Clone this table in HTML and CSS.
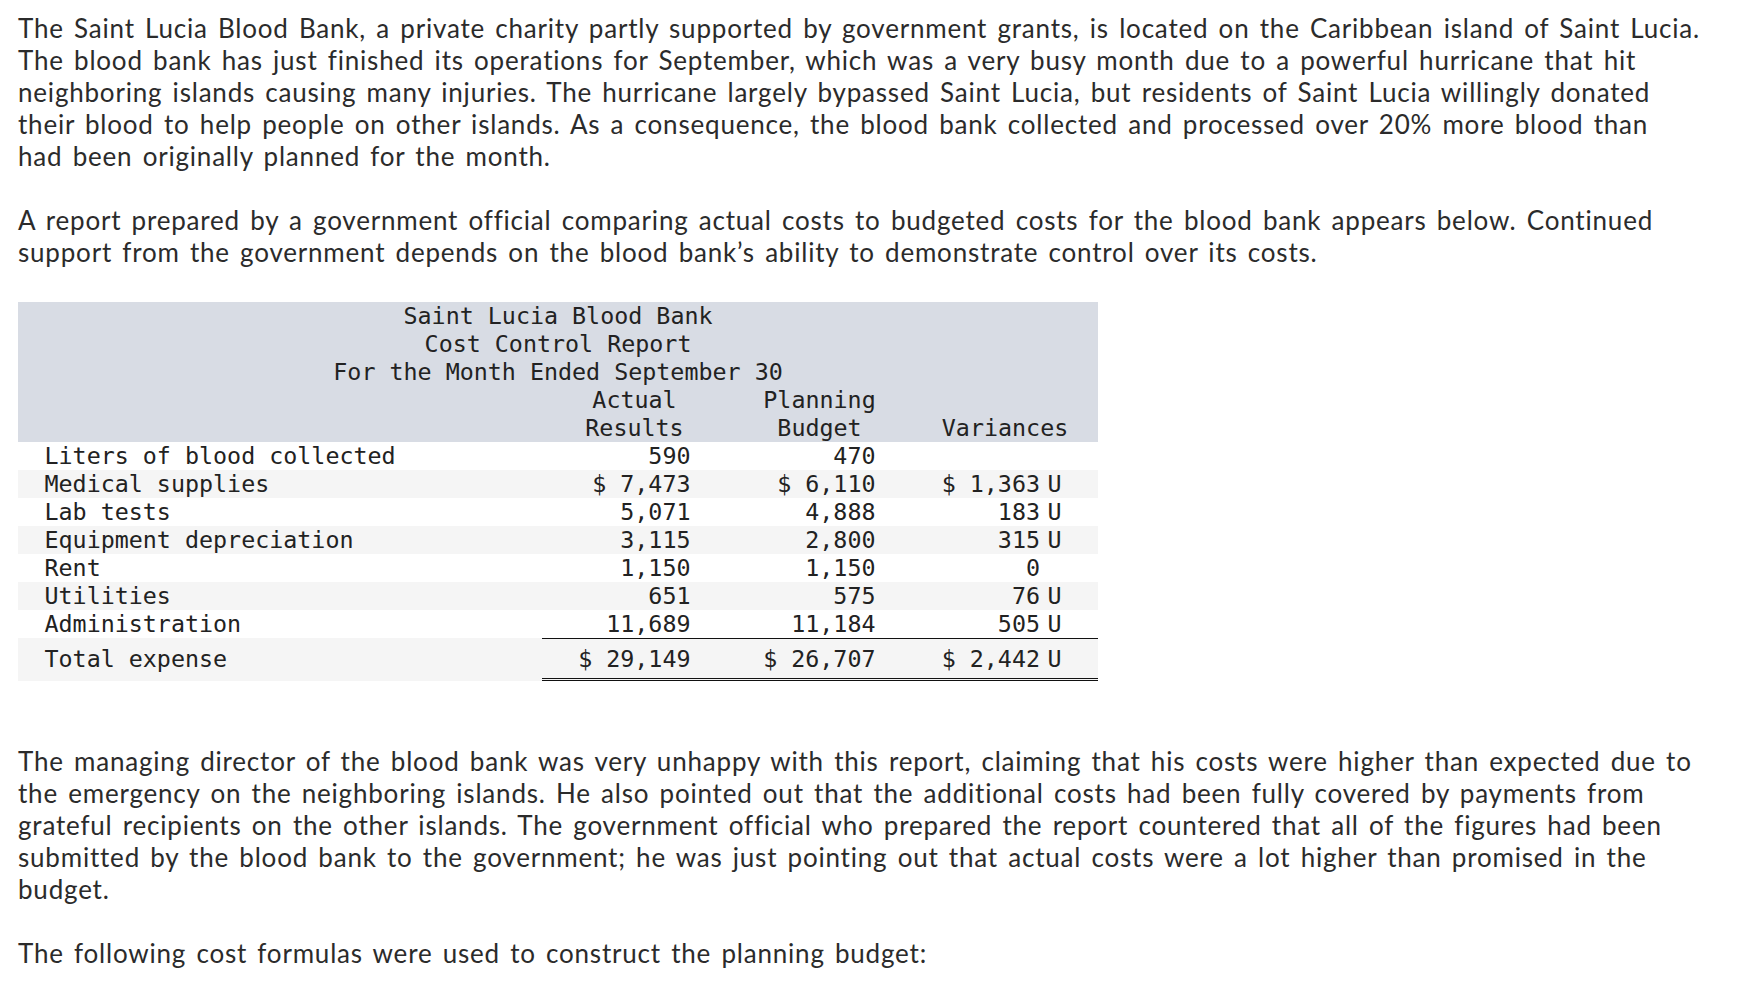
FILE: index.html
```html
<!DOCTYPE html>
<html lang="en">
<head>
<meta charset="utf-8">
<title>Saint Lucia Blood Bank</title>
<link rel="stylesheet" href="styles.css">
</head>
<body>
<main class="page">
  <p class="para">The Saint Lucia Blood Bank, a private charity partly supported by government grants, is located on the Caribbean island of Saint Lucia. The blood bank has just finished its operations for September, which was a very busy month due to a powerful hurricane that hit neighboring islands causing many injuries. The hurricane largely bypassed Saint Lucia, but residents of Saint Lucia willingly donated their blood to help people on other islands. As a consequence, the blood bank collected and processed over 20% more blood than had&nbsp;been originally planned for the month.</p>
  <p class="para">A report prepared by a government official comparing actual costs to budgeted costs for the blood bank appears below. Continued support from the government depends on the blood bank’s ability to demonstrate control over its costs.</p>

  <table class="report">
    <colgroup>
      <col class="c-label">
      <col class="c-num">
      <col class="c-num">
      <col class="c-var">
    </colgroup>
    <thead>
      <tr class="title"><th colspan="4">Saint Lucia Blood Bank</th></tr>
      <tr class="title"><th colspan="4">Cost Control Report</th></tr>
      <tr class="title"><th colspan="4">For the Month Ended September 30</th></tr>
      <tr class="heads">
        <th></th>
        <th>Actual<br>Results</th>
        <th>Planning<br>Budget</th>
        <th>Variances</th>
      </tr>
    </thead>
    <tbody>
      <tr>
        <td class="label">Liters of blood collected</td>
        <td class="num">590</td>
        <td class="num">470</td>
        <td class="num"></td>
      </tr>
      <tr class="alt">
        <td class="label">Medical supplies</td>
        <td class="num">$ 7,473</td>
        <td class="num">$ 6,110</td>
        <td class="num">$ 1,363<span class="flag">U</span></td>
      </tr>
      <tr>
        <td class="label">Lab tests</td>
        <td class="num">5,071</td>
        <td class="num">4,888</td>
        <td class="num">183<span class="flag">U</span></td>
      </tr>
      <tr class="alt">
        <td class="label">Equipment depreciation</td>
        <td class="num">3,115</td>
        <td class="num">2,800</td>
        <td class="num">315<span class="flag">U</span></td>
      </tr>
      <tr>
        <td class="label">Rent</td>
        <td class="num">1,150</td>
        <td class="num">1,150</td>
        <td class="num">0<span class="flag blank">U</span></td>
      </tr>
      <tr class="alt">
        <td class="label">Utilities</td>
        <td class="num">651</td>
        <td class="num">575</td>
        <td class="num">76<span class="flag">U</span></td>
      </tr>
      <tr>
        <td class="label">Administration</td>
        <td class="num">11,689</td>
        <td class="num">11,184</td>
        <td class="num">505<span class="flag">U</span></td>
      </tr>
      <tr class="alt total">
        <td class="label">Total expense</td>
        <td class="num">$ 29,149</td>
        <td class="num">$ 26,707</td>
        <td class="num">$ 2,442<span class="flag">U</span></td>
      </tr>
    </tbody>
  </table>

  <p class="para">The managing director of the blood bank was very unhappy with this report, claiming that his costs were higher than expected due to the emergency on the neighboring islands. He also pointed out that the additional costs had been fully covered by payments from grateful recipients on the other islands. The government official who prepared the report countered that all of the figures had been submitted by the blood bank to the government; he was just pointing out that actual costs were a lot higher than promised in the budget.</p>
  <p class="para">The following cost formulas were used to construct the planning budget:</p>
</main>
</body>
</html>
```

FILE: styles.css
```css
html, body {
  margin: 0;
  padding: 0;
  background: #ffffff;
}

.page {
  padding: 12px 18px 0 18px;
  width: 1690px;
  color: #2b2b2b;
  font-family: "Lato", "Liberation Sans", sans-serif;
  font-size: 26px;
  letter-spacing: 0.8px;
  word-spacing: 2.8px;
  line-height: 32px;
}

.para {
  margin: 0 0 32px 0;
}

.report {
  border-collapse: separate;
  border-spacing: 0;
  width: 1080px;
  table-layout: fixed;
  margin: 34px 0 64px 0;
  font-family: "DejaVu Sans Mono", "Liberation Mono", monospace;
  font-size: 23.33px;
  letter-spacing: 0;
  word-spacing: 0;
  line-height: 28px;
  color: #222222;
}

.c-label { width: 524px; }
.c-num { width: 185px; }
.c-var { width: 186px; }

.report thead th {
  background: #d8dce4;
  font-weight: normal;
  padding: 0;
  text-align: center;
  vertical-align: bottom;
}

.report td {
  padding: 0;
  height: 28px;
}

.report tr.alt td {
  background: #f5f5f5;
}

.label {
  padding-left: 26.5px !important;
  text-align: left;
  white-space: nowrap;
}

.num {
  text-align: right;
  padding-right: 36.5px !important;
  white-space: nowrap;
}

.flag {
  display: inline-block;
  margin-left: 7.5px;
}

.flag.blank {
  visibility: hidden;
}

.report tr.total td {
  height: 39px;
  border-top: 1px solid transparent;
  border-bottom: 3px double transparent;
}

.report tr.total td.num {
  border-top-color: #111111;
  border-bottom-color: #111111;
}
```
